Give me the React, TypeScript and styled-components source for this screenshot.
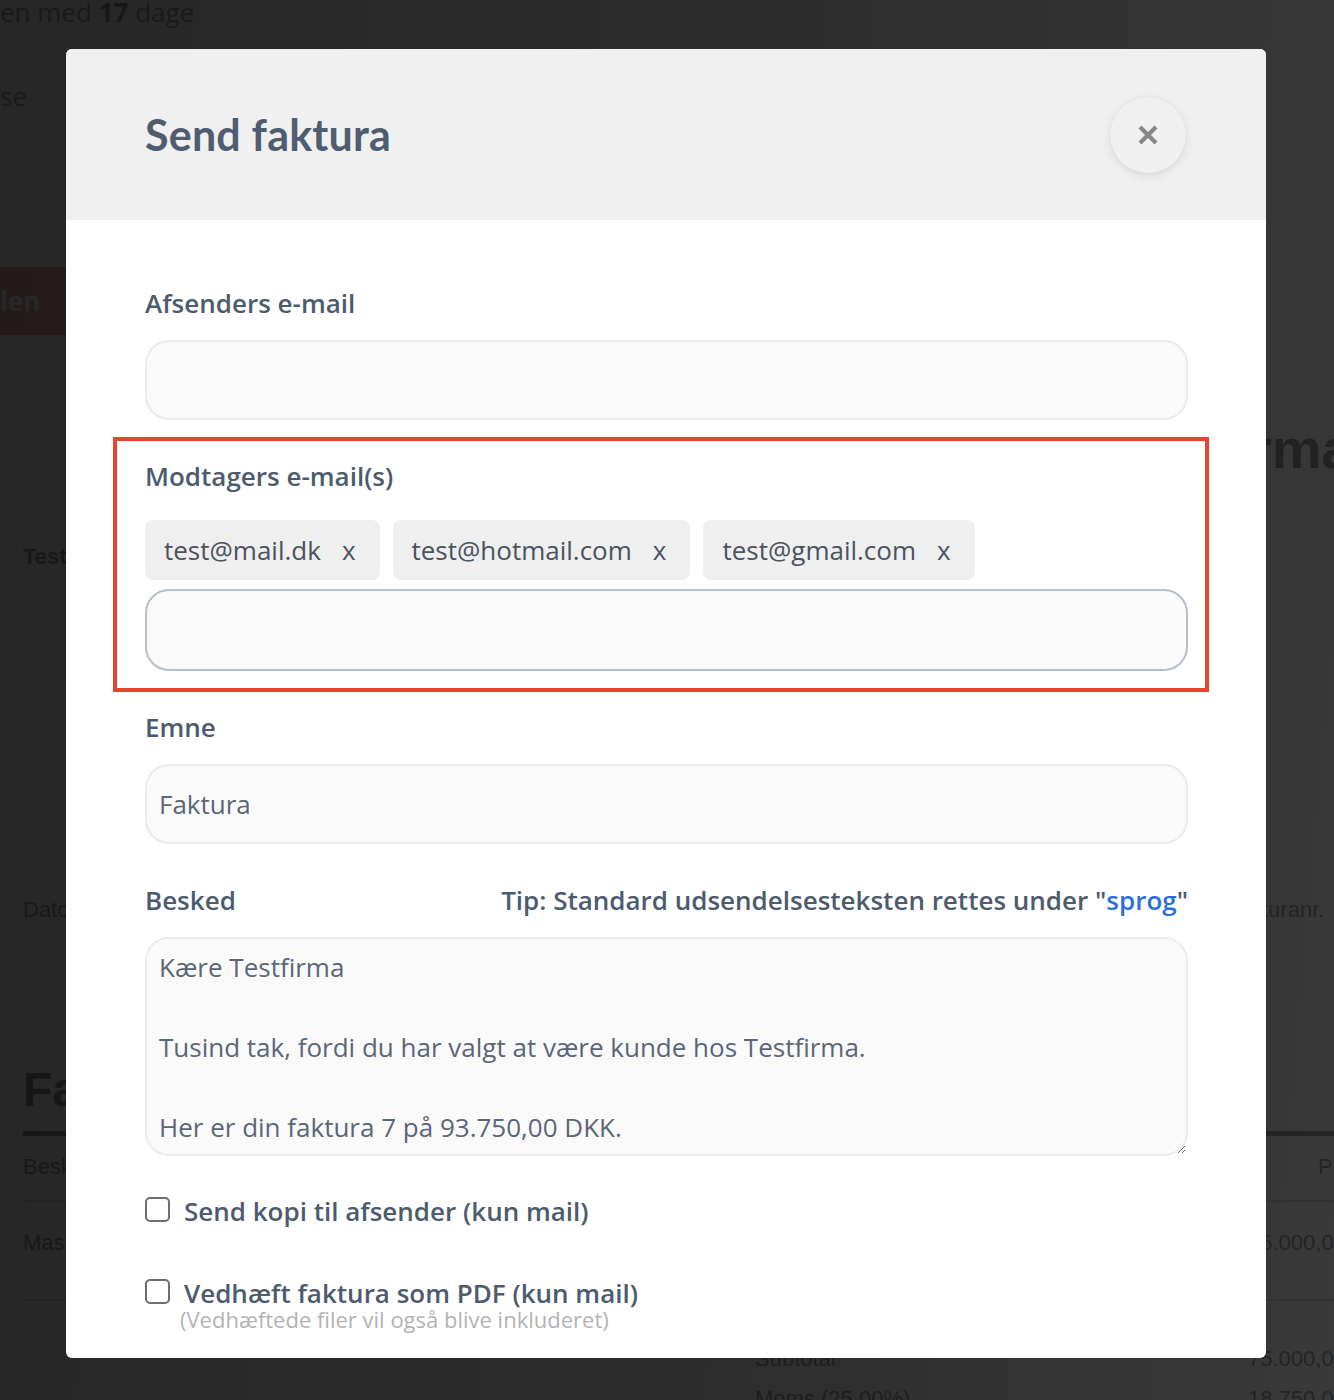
import React, { useState } from 'react'
import styled, { createGlobalStyle } from 'styled-components'

const GlobalStyle = createGlobalStyle`
  html, body {
    margin: 0;
    padding: 0;
    height: 1400px;
    overflow: hidden;
    background: #fff;
  }
  * { box-sizing: border-box; }
`

// ---------- page behind the modal ----------

const Page = styled.div`
  width: 1400px;
  font-family: 'Liberation Sans', Arial, sans-serif;
  color: #333;
  background: #fff;
`

const TopNote = styled.div`
  margin-top: -6px;
  font-family: 'Open Sans', sans-serif;
  font-size: 26px;
  line-height: 36px;
  color: #444;

  b { font-weight: 700; color: #222; }
`

const BackLink = styled.div`
  margin-top: 48px;
  font-family: 'Open Sans', sans-serif;
  font-size: 26px;
  line-height: 36px;
  color: #2c5a94;
`

const DangerButton = styled.div`
  margin-top: 153px;
  width: 240px;
  height: 68px;
  display: flex;
  align-items: center;
  background: #e0554c;
  color: #fff;
  font-family: 'Open Sans', sans-serif;
  font-weight: 700;
  font-size: 26px;
`

const SplitRow = styled.div`
  display: grid;
  grid-template-columns: 1227px 1fr;
  padding-left: 23px;
`

const Cell = styled.div<{ $top: number; $size?: number; $bold?: boolean; $indent?: number }>`
  margin-top: ${({ $top }) => $top}px;
  padding-left: ${({ $indent = 0 }) => $indent}px;
  font-size: ${({ $size = 22 }) => $size}px;
  line-height: ${({ $size = 22 }) => Math.round($size * 1.2)}px;
  font-weight: ${({ $bold }) => ($bold ? 700 : 400)};
  white-space: nowrap;
`

const SectionTitle = styled.div`
  margin-top: 139px;
  padding-left: 23px;
  font-size: 48px;
  line-height: 56px;
  font-weight: 700;
  color: #222;
`

const Table = styled.div`
  margin: 13px 0 0 23px;
  border-top: 5px solid #333;
`

const TableRow = styled.div<{ $pt: number; $pb: number; $line?: boolean }>`
  display: grid;
  grid-template-columns: 732px 493px 1fr;
  padding: ${({ $pt, $pb }) => `${$pt}px 0 ${$pb}px`};
  border-bottom: ${({ $line }) => ($line ? '2px solid #bbb' : 'none')};
  font-size: 22px;
  line-height: 26px;
  white-space: nowrap;
`

const Totals = styled.div`
  display: grid;
  grid-template-columns: 732px 493px 1fr;
  row-gap: 14px;
  padding-top: 45px;
  margin-left: 23px;
  font-size: 22px;
  line-height: 26px;
  white-space: nowrap;
`

// ---------- overlay and modal ----------

const Backdrop = styled.div`
  position: fixed;
  inset: 0;
  display: flex;
  justify-content: center;
  align-items: flex-start;
  padding: 49px 2px 0 0;
  background: linear-gradient(95deg, rgba(22, 22, 22, 0.93) 0%, rgba(26, 26, 26, 0.92) 55%, rgba(36, 36, 36, 0.9) 100%);
`

const Modal = styled.div`
  width: 1200px;
  background: #fff;
  border-radius: 6px;
  overflow: hidden;
  font-family: 'Open Sans', sans-serif;
  color: #4d5b6e;
`

const Header = styled.div`
  height: 171px;
  display: flex;
  align-items: center;
  justify-content: space-between;
  padding: 0 80px 0 79px;
  background: #f0f0f0;
`

const Title = styled.h2`
  margin: 0;
  font-family: Lato, 'Open Sans', sans-serif;
  font-size: 43px;
  font-weight: 700;
  letter-spacing: 0.2px;
  color: #4e5d72;
`

const CloseButton = styled.button`
  all: unset;
  width: 76px;
  height: 76px;
  border-radius: 50%;
  display: flex;
  align-items: center;
  justify-content: center;
  background: #f0f0f0;
  box-shadow: 0 3px 10px rgba(0, 0, 0, 0.1), 0 0 0 1px rgba(0, 0, 0, 0.02);
  cursor: pointer;
`

const Body = styled.div`
  display: flex;
  flex-direction: column;
  gap: 39px;
  padding: 66px 78px 28px 79px;
`

const Field = styled.div`
  display: flex;
  flex-direction: column;
`

const Highlight = styled.div`
  display: flex;
  flex-direction: column;
  margin: -22px -21px -21px -32px;
  padding: 18px 17px 17px 28px;
  border: 4px solid #e8432b;
`

const LabelRow = styled.div`
  display: flex;
  align-items: center;
  justify-content: space-between;
  margin-bottom: 20px;
`

const Label = styled.label`
  font-size: 26px;
  line-height: 34px;
  font-weight: 600;
  color: #4d5b6e;
`

const Tip = styled.span`
  font-size: 26px;
  line-height: 34px;
  font-weight: 600;
  color: #4d5b6e;

  a {
    color: #2a6fdb;
    text-decoration: none;
  }
`

const TextInput = styled.input<{ $active?: boolean }>`
  width: 100%;
  height: ${({ $active }) => ($active ? 82 : 80)}px;
  padding: 0 12px;
  border: 2px solid ${({ $active }) => ($active ? '#b6bfcb' : '#ebebeb')};
  border-radius: 24px;
  background: #fafafa;
  font-family: 'Open Sans', sans-serif;
  font-size: 26px;
  color: #5a6678;
  outline: none;
`

const Chips = styled.div`
  display: flex;
  flex-wrap: wrap;
  gap: 13px;
  margin: 27px 0 9px;
`

const Chip = styled.span`
  display: inline-flex;
  align-items: center;
  gap: 21px;
  height: 60px;
  padding: 0 24px 0 19px;
  border-radius: 8px;
  background: #efefef;
  font-size: 26px;
  color: #4a5360;
`

const ChipRemove = styled.span`
  font-size: 26px;
  line-height: 1;
  cursor: pointer;
`

const Message = styled.textarea`
  width: 100%;
  height: 219px;
  padding: 8px 12px;
  border: 2px solid #ebebeb;
  border-radius: 24px;
  background: #fafafa;
  font-family: 'Open Sans', sans-serif;
  font-size: 26px;
  line-height: 40px;
  color: #5a6678;
  outline: none;
`

const Checks = styled.div`
  display: flex;
  flex-direction: column;
  gap: 52px;
  margin-top: 1px;
`

const CheckRow = styled.label`
  display: flex;
  align-items: center;
  gap: 14px;
  cursor: pointer;
`

const Box = styled.input`
  appearance: none;
  margin: 0;
  width: 25px;
  height: 25px;
  flex: none;
  border: 2px solid #6e6e6e;
  border-radius: 5px;
  background: #fff;
  transform: translateY(-2px);

  &:checked {
    background: #4e5d72;
    border-color: #4e5d72;
  }
`

const CheckText = styled.span`
  font-size: 26px;
  line-height: 30px;
  font-weight: 600;
  color: #4d5b6e;
`

const Hint = styled.div`
  margin: 0 0 0 35px;
  font-size: 22px;
  line-height: 22px;
  color: #b3b3b3;
`

const MESSAGE = `Kære Testfirma

Tusind tak, fordi du har valgt at være kunde hos Testfirma.

Her er din faktura 7 på 93.750,00 DKK.`

export default function App() {
  const [recipients, setRecipients] = useState(['test@mail.dk', 'test@hotmail.com', 'test@gmail.com'])
  const [copy, setCopy] = useState(false)
  const [attach, setAttach] = useState(false)

  return (
    <>
      <GlobalStyle />
      <Page>
        <TopNote>en med <b>17</b> dage</TopNote>
        <BackLink>se</BackLink>
        <DangerButton>len</DangerButton>
        <SplitRow>
          <Cell $top={209} $bold>Test</Cell>
          <Cell $top={80} $size={56} $bold style={{ color: '#222' }}>rma</Cell>
        </SplitRow>
        <SplitRow>
          <Cell $top={327}>Dato</Cell>
          <Cell $top={327} $indent={12}>turanr.</Cell>
        </SplitRow>
        <SectionTitle>Fa</SectionTitle>
        <Table>
          <TableRow $pt={18} $pb={20} $line>
            <span>Besk</span>
            <span />
            <span style={{ paddingLeft: 70 }}>Pr</span>
          </TableRow>
          <TableRow $pt={28} $pb={43} $line>
            <span>Mas</span>
            <span />
            <span>75.000,00</span>
          </TableRow>
        </Table>
        <Totals>
          <span />
          <span>Subtotal</span>
          <span>75.000,00</span>
          <span />
          <span>Moms (25,00%)</span>
          <span>18.750,00</span>
        </Totals>
      </Page>

      <Backdrop>
        <Modal>
          <Header>
            <Title>Send faktura</Title>
            <CloseButton aria-label="Luk">
              <svg width="22" height="22" viewBox="0 0 22 22">
                <path d="M3 3 L19 19 M19 3 L3 19" stroke="#878787" strokeWidth="4.2" />
              </svg>
            </CloseButton>
          </Header>

          <Body>
            <Field>
              <LabelRow><Label>Afsenders e-mail</Label></LabelRow>
              <TextInput />
            </Field>

            <Highlight>
              <Label>Modtagers e-mail(s)</Label>
              <Chips>
                {recipients.map((r) => (
                  <Chip key={r}>
                    {r}
                    <ChipRemove onClick={() => setRecipients(recipients.filter((x) => x !== r))}>x</ChipRemove>
                  </Chip>
                ))}
              </Chips>
              <TextInput $active />
            </Highlight>

            <Field>
              <LabelRow><Label>Emne</Label></LabelRow>
              <TextInput defaultValue="Faktura" />
            </Field>

            <Field>
              <LabelRow>
                <Label>Besked</Label>
                <Tip>Tip: Standard udsendelsesteksten rettes under "<a href="#">sprog</a>"</Tip>
              </LabelRow>
              <Message defaultValue={MESSAGE} />
            </Field>

            <Checks>
              <CheckRow>
                <Box type="checkbox" checked={copy} onChange={() => setCopy(!copy)} />
                <CheckText>Send kopi til afsender (kun mail)</CheckText>
              </CheckRow>
              <div>
                <CheckRow>
                  <Box type="checkbox" checked={attach} onChange={() => setAttach(!attach)} />
                  <CheckText>Vedhæft faktura som PDF (kun mail)</CheckText>
                </CheckRow>
                <Hint>(Vedhæftede filer vil også blive inkluderet)</Hint>
              </div>
            </Checks>
          </Body>
        </Modal>
      </Backdrop>
    </>
  )
}
